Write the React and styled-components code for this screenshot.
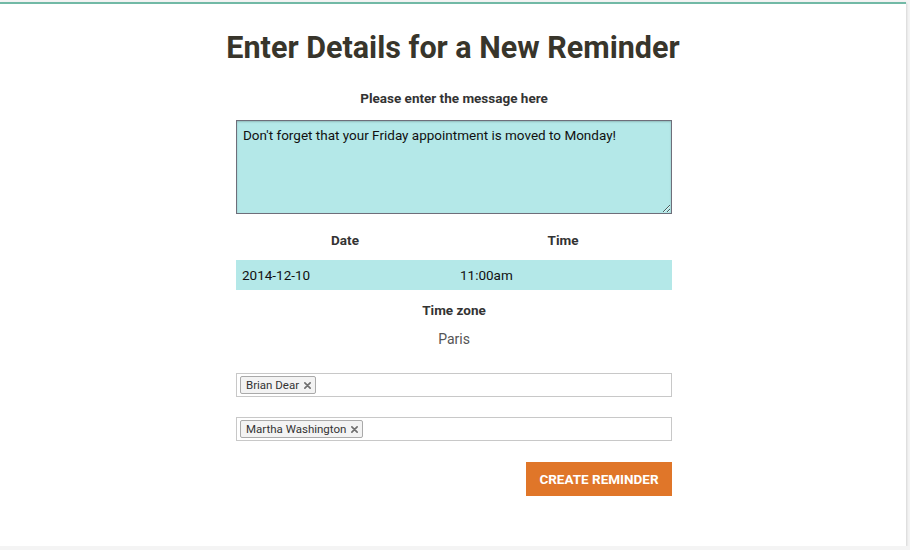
import React from "react";
import styled, { createGlobalStyle } from "styled-components";

const GlobalStyle = createGlobalStyle`
  html, body {
    margin: 0;
    padding: 0;
    background: #f4f4f4;
    font-family: Roboto, "Liberation Sans", sans-serif;
  }
`;

const Card = styled.div`
  width: 906px;
  height: 544px;
  margin-top: 2px;
  background: #fff;
  border-top: 2px solid #72b9a6;
  box-shadow: 1px 1px 2px rgba(0, 0, 0, 0.12), -1px 0 0 #ececec;
  box-sizing: border-box;
  display: flex;
  flex-direction: column;
  align-items: center;
`;

const Title = styled.h1`
  margin: 26px 0 0;
  font-size: 30.5px;
  font-weight: 700;
  line-height: 36px;
  color: #38352b;
  text-align: center;
`;

const Form = styled.div`
  width: 436px;
  margin-left: 2px;
  display: flex;
  flex-direction: column;
`;

const Label = styled.div`
  font-size: 13.5px;
  font-weight: 700;
  color: #333;
  text-align: center;
  line-height: 16px;
  margin-top: ${p => p.$top || 0}px;
`;

const Message = styled.textarea`
  margin-top: 14px;
  height: 94px;
  box-sizing: border-box;
  background: #b4e8e8;
  border: 1px solid #6e6e7a;
  box-shadow: inset 0 1px 2px rgba(0, 0, 0, 0.2);
  padding: 6px 6px;
  font-family: Roboto, "Liberation Sans", sans-serif;
  font-size: 13.5px;
  line-height: 16px;
  color: #111;
  resize: vertical;
  outline: none;
`;

const Columns = styled.div`
  display: grid;
  grid-template-columns: 1fr 1fr;
  margin-top: ${p => p.$top || 0}px;
`;

const ColLabel = styled(Label)`
  margin: 0;
`;

const ValueRow = styled(Columns)`
  background: #b4e8e8;
  height: 30px;
  align-items: center;
  font-size: 13.5px;
  color: #111;
`;

const Value = styled.div`
  padding-left: 6px;
`;

const Zone = styled.div`
  text-align: center;
  font-size: 14px;
  color: #555;
  margin-top: 13px;
  line-height: 16px;
`;

const TagBox = styled.div`
  margin-top: ${p => p.$top}px;
  height: 24px;
  box-sizing: border-box;
  border: 1px solid #c8c8c8;
  display: flex;
  align-items: center;
  padding-left: 3px;
`;

const Tag = styled.span`
  display: inline-flex;
  align-items: center;
  gap: 5px;
  height: 18px;
  box-sizing: border-box;
  padding: 0 4px 0 5px;
  border: 1px solid #aaa;
  border-radius: 2px;
  background: #f3f3f3;
  font-size: 11.5px;
  color: #333;
`;

const Remove = styled.svg`
  width: 7px;
  height: 7px;
  display: block;
`;

const Cross = () => (
  <Remove viewBox="0 0 8 8">
    <path d="M1 1L7 7M7 1L1 7" stroke="#6f6f6f" strokeWidth="1.9" strokeLinecap="round" />
  </Remove>
);

const Actions = styled.div`
  display: flex;
  justify-content: flex-end;
  margin-top: 21px;
`;

const Button = styled.button`
  width: 146px;
  height: 34px;
  background: #e07629;
  border: none;
  color: #fff;
  font-family: Roboto, "Liberation Sans", sans-serif;
  font-size: 13.5px;
  font-weight: 700;
  text-transform: uppercase;
  cursor: pointer;
`;

export default function App() {
  return (
    <>
      <GlobalStyle />
      <Card>
        <Title>Enter Details for a New Reminder</Title>
        <Form>
          <Label $top={24}>Please enter the message here</Label>
          <Message defaultValue="Don't forget that your Friday appointment is moved to Monday!" />
          <Columns $top={18}>
            <ColLabel>Date</ColLabel>
            <ColLabel>Time</ColLabel>
          </Columns>
          <ValueRow $top={12}>
            <Value>2014-12-10</Value>
            <Value>11:00am</Value>
          </ValueRow>
          <Label $top={12}>Time zone</Label>
          <Zone>Paris</Zone>
          <TagBox $top={26}>
            <Tag>Brian Dear<Cross /></Tag>
          </TagBox>
          <TagBox $top={20}>
            <Tag>Martha Washington<Cross /></Tag>
          </TagBox>
          <Actions>
            <Button>Create Reminder</Button>
          </Actions>
        </Form>
      </Card>
    </>
  );
}
